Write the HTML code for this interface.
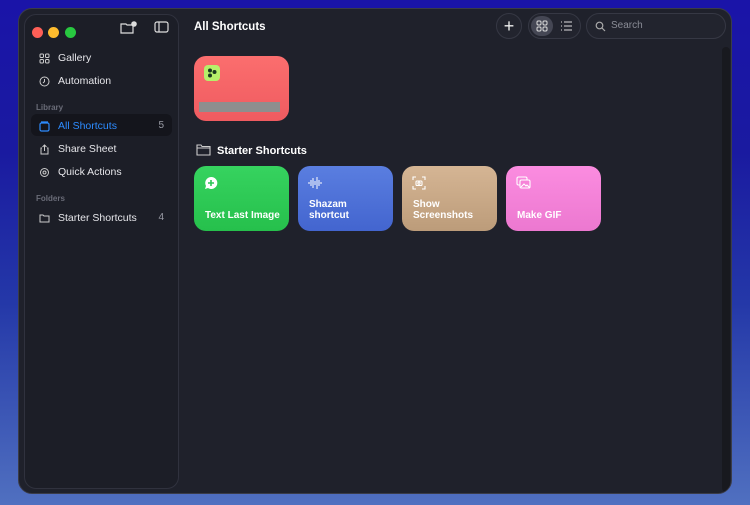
<!DOCTYPE html>
<html><head><style>
*{margin:0;padding:0;box-sizing:border-box}
body{width:750px;height:505px;overflow:hidden;font-family:"Liberation Sans",sans-serif;background:linear-gradient(180deg,#1a14a8 0%,#1a1aa0 30%,#2438a8 60%,#5070c0 100%);position:relative}
.win{position:absolute;left:18px;top:8px;width:714px;height:486px;background:#1f212b;border-radius:14px;border:1px solid #3a3c48;overflow:hidden}
.side{position:absolute;left:5px;top:5px;width:155px;height:475px;background:#1c1e27;border:1px solid #30323e;border-radius:12px}
.dot{position:absolute;top:12px;width:11px;height:11px;border-radius:50%}
.it{position:absolute;left:14px;font-size:10.5px;color:#e6e6ea;display:flex;align-items:center;gap:8px}
.it svg{width:11px;height:11px}
.sec{position:absolute;left:11px;font-size:8px;color:#6a6c78;font-weight:bold}
.cnt{position:absolute;right:14px;font-size:10px;color:#9a9ca6}
.t{position:absolute;color:#fff;font-size:11.5px;font-weight:bold}
.card{position:absolute;width:95px;height:65px;border-radius:12px;top:157px}
.card .l{position:absolute;left:11px;bottom:10px;color:#fff;font-size:10px;font-weight:bold;line-height:11px}
.card svg{position:absolute;left:10px;top:10px}
</style></head><body>
<div class="win">
 <div class="side">
  <div class="dot" style="left:7px;background:#fe5f57"></div>
  <div class="dot" style="left:23px;background:#febc2e"></div>
  <div class="dot" style="left:40px;background:#28c840"></div>
  <svg style="position:absolute;left:95px;top:6px" width="18" height="13" viewBox="0 0 18 13" fill="none" stroke="#ddd" stroke-width="1.2"><path d="M1 3h5l1 1h6v8H1z"/><circle cx="14" cy="3" r="2.2" fill="#ddd"/></svg>
  <svg style="position:absolute;left:129px;top:6px" width="15" height="12" viewBox="0 0 15 12" fill="none" stroke="#ddd" stroke-width="1.2"><rect x="1" y="1" width="13" height="10" rx="2"/><path d="M5 1v10"/></svg>
  <div class="it" style="top:37px"><svg viewBox="0 0 11 11" fill="none" stroke="#ccc"><rect x="1" y="1" width="3.5" height="3.5" rx="1"/><rect x="6.5" y="1" width="3.5" height="3.5" rx="1"/><rect x="1" y="6.5" width="3.5" height="3.5" rx="1"/><rect x="6.5" y="6.5" width="3.5" height="3.5" rx="1"/></svg>Gallery</div>
  <div class="it" style="top:60px"><svg viewBox="0 0 11 11" fill="none" stroke="#ccc"><circle cx="5.5" cy="5.5" r="4.5"/><path d="M5.5 3v2.5L4 7"/></svg>Automation</div>
  <div class="sec" style="top:88px">Library</div>
  <div style="position:absolute;left:6px;top:99px;width:141px;height:22px;background:#14151c;border-radius:6px"></div>
  <div class="it" style="top:105px;color:#2d8cff"><svg viewBox="0 0 11 11" fill="none" stroke="#2d8cff" stroke-width="1.2"><rect x="1" y="2" width="9" height="8" rx="1.5"/><path d="M2 1h7"/></svg>All Shortcuts</div>
  <div class="cnt" style="top:105px">5</div>
  <div class="it" style="top:128px"><svg viewBox="0 0 11 11" fill="none" stroke="#ccc"><path d="M3 4H2v6h7V4H8M5.5 1v6M3.5 3l2-2 2 2"/></svg>Share Sheet</div>
  <div class="it" style="top:151px"><svg viewBox="0 0 11 11" fill="none" stroke="#ccc"><circle cx="5.5" cy="5.5" r="4"/><circle cx="5.5" cy="5.5" r="1.5"/></svg>Quick Actions</div>
  <div class="sec" style="top:179px">Folders</div>
  <div class="it" style="top:197px"><svg viewBox="0 0 11 11" fill="none" stroke="#ccc"><path d="M1 2h3l1 1h5v6H1z"/></svg>Starter Shortcuts</div>
  <div class="cnt" style="top:197px">4</div>
 </div>
 <div class="t" style="left:175px;top:12px">All Shortcuts</div>
 <div style="position:absolute;left:477px;top:4px;width:26px;height:26px;border-radius:50%;border:1px solid #363844;background:#22242e;color:#eee;font-size:18px;text-align:center;line-height:24px">+</div>
 <div style="position:absolute;left:509px;top:4px;width:53px;height:26px;border-radius:13px;border:1px solid #363844;background:#22242e">
  <div style="position:absolute;left:2px;top:2px;width:22px;height:20px;border-radius:10px;background:#454754"></div>
  <svg style="position:absolute;left:7px;top:6px" width="12" height="12" viewBox="0 0 12 12" fill="none" stroke="#ddd"><rect x="1" y="1" width="4" height="4" rx="1.2"/><rect x="7" y="1" width="4" height="4" rx="1.2"/><rect x="1" y="7" width="4" height="4" rx="1.2"/><rect x="7" y="7" width="4" height="4" rx="1.2"/></svg>
  <svg style="position:absolute;left:31px;top:7px" width="12" height="10" viewBox="0 0 12 10" fill="none" stroke="#ddd"><path d="M4 1h8M4 5h8M4 9h8M1 1h1M1 5h1M1 9h1"/></svg>
 </div>
 <div style="position:absolute;left:567px;top:4px;width:140px;height:26px;border-radius:13px;border:1px solid #363844;background:#22242e;color:#8a8c96;font-size:10px;line-height:24px;padding-left:24px">Search
  <svg style="position:absolute;left:8px;top:7px" width="11" height="11" viewBox="0 0 11 11" fill="none" stroke="#aaa" stroke-width="1.2"><circle cx="4.5" cy="4.5" r="3.3"/><path d="M7 7l3 3"/></svg>
 </div>
 <div style="position:absolute;left:703px;top:38px;width:8px;height:445px;background:#18191f;border-radius:4px"></div>
 <div class="card" style="left:175px;top:47px;background:linear-gradient(#fb6e6e,#ef5b60)">
  <div style="position:absolute;left:10px;top:9px;width:16px;height:16px;border-radius:4px;background:#b6f06a"></div>
  <svg style="left:12px;top:11px" width="12" height="12" viewBox="0 0 12 12" fill="#1a3a20"><circle cx="4" cy="3.5" r="2"/><circle cx="8.5" cy="5" r="2"/><circle cx="4" cy="8.5" r="2"/></svg>
  <div style="position:absolute;left:5px;top:46px;width:81px;height:10px;background:#8e8e8e"></div>
 </div>
 <svg style="position:absolute;left:177px;top:135px" width="15" height="12" viewBox="0 0 15 12" fill="none" stroke="#ccc" stroke-width="1.1"><path d="M1 1h4l1 1.5h8V11H1z M1 4h13"/></svg>
 <div class="t" style="left:198px;top:136px;font-size:11px">Starter Shortcuts</div>
 <div class="card" style="left:175px;background:linear-gradient(#36d35f,#26c04c)"><svg width="14" height="14" viewBox="0 0 14 14"><path d="M7 1a6 6 0 1 1-3 11l-3 1 1-3A6 6 0 0 1 7 1z" fill="#fff"/><path d="M7 4v6M4 7h6" stroke="#2cc656" stroke-width="1.6"/></svg><div class="l">Text Last Image</div></div>
 <div class="card" style="left:279px;background:linear-gradient(#5a7ee0,#4365cf)"><svg width="14" height="14" viewBox="0 0 14 14" stroke="#fff" stroke-width="1"><path d="M1 6v2M3 4v6M5 2v10M7 5v4M9 1v12M11 4v6M13 6v2"/></svg><div class="l">Shazam<br>shortcut</div></div>
 <div class="card" style="left:383px;background:linear-gradient(#d5b594,#bc9c7a)"><svg width="14" height="14" viewBox="0 0 14 14" fill="none" stroke="#fff" stroke-width="1.1"><path d="M1 4V1h3M10 1h3v3M13 10v3h-3M4 13H1v-3"/><rect x="4" y="5" width="6" height="4.5" rx="1"/><circle cx="7" cy="7.2" r="1.1"/></svg><div class="l">Show<br>Screenshots</div></div>
 <div class="card" style="left:487px;background:linear-gradient(#fb8ce0,#ec78d0)"><svg width="15" height="14" viewBox="0 0 15 14" fill="none" stroke="#fff" stroke-width="1.1"><rect x="1" y="1" width="10" height="8" rx="1.5"/><rect x="4" y="4" width="10" height="8" rx="1.5" fill="#f683d8"/><path d="M5 11l3-3 2 2 1-1 3 3"/></svg><div class="l">Make GIF</div></div>
</div>
</body></html>
